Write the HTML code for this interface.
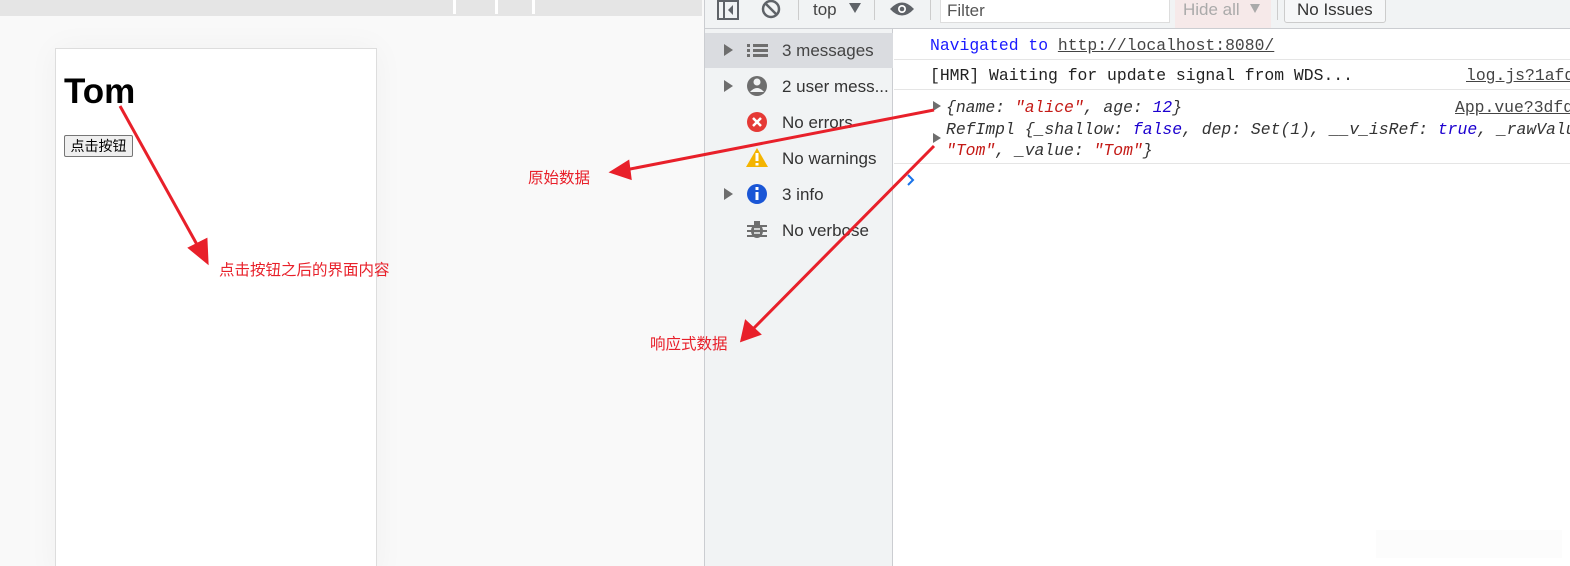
<!DOCTYPE html>
<html><head><meta charset="utf-8"><style>
*{margin:0;padding:0;box-sizing:border-box}
html,body{width:1570px;height:566px;overflow:hidden}
body{position:relative;background:#f9f9f9;font-family:"Liberation Sans","Noto Sans CJK SC",sans-serif}
.abs{position:absolute}
.mono{font-family:"Liberation Mono","Noto Sans CJK SC",monospace;font-size:16.4px;white-space:nowrap}
.side{font-size:17px;color:#333}
</style></head><body>
<div class="abs" style="left:0;top:0;width:702px;height:16px;background:#e5e5e5"></div>
<div class="abs" style="left:453px;top:0;width:3px;height:14px;background:#fff"></div>
<div class="abs" style="left:495px;top:0;width:3px;height:14px;background:#fff"></div>
<div class="abs" style="left:532px;top:0;width:3px;height:14px;background:#fff"></div>
<div class="abs" style="left:55px;top:48px;width:322px;height:530px;background:#fff;border:1px solid #ddd;box-shadow:0 0 30px rgba(0,0,0,0.04)"></div>
<div class="abs" style="left:64px;top:72px;font-size:35px;font-weight:bold;color:#000">Tom</div>
<div class="abs" style="left:64px;top:135px;width:69px;height:22px;border:1px solid #767676;border-radius:2px;background:#efefef;font-size:14px;line-height:20px;text-align:center">点击按钮</div>

<div class="abs" style="left:704px;top:0;width:866px;height:566px;background:#fff;border-left:1px solid #cbcdd1"></div>
<div class="abs" style="left:705px;top:0;width:865px;height:29px;background:#f1f3f4;border-bottom:1px solid #cbcdd1"></div>
<svg class="abs" style="left:716px;top:0" width="26" height="22"><rect x="2" y="1" width="20" height="18" fill="none" stroke="#5f6368" stroke-width="2"/><line x1="8" y1="1" x2="8" y2="19" stroke="#5f6368" stroke-width="2"/><path d="M17 5 L12 10 L17 15Z" fill="#5f6368"/></svg>
<svg class="abs" style="left:760px;top:0" width="24" height="22"><circle cx="11" cy="9" r="8" fill="none" stroke="#5f6368" stroke-width="2.5"/><line x1="5.5" y1="3.5" x2="16.5" y2="14.5" stroke="#5f6368" stroke-width="2.5"/></svg>
<div class="abs" style="left:798px;top:0;width:1px;height:20px;background:#ccc"></div>
<div class="abs side" style="left:813px;top:0;color:#444">top</div>
<div class="abs" style="left:849px;top:3px;width:0;height:0;border-left:6px solid transparent;border-right:6px solid transparent;border-top:10px solid #5f6368"></div>
<div class="abs" style="left:874px;top:0;width:1px;height:20px;background:#ccc"></div>
<svg class="abs" style="left:889px;top:0" width="28" height="20"><path d="M1 9 Q13 -4 25 9 Q13 22 1 9Z" fill="#5f6368"/><circle cx="13" cy="9" r="4" fill="#fff"/><circle cx="13" cy="9" r="2.3" fill="#5f6368"/></svg>
<div class="abs" style="left:930px;top:0;width:1px;height:20px;background:#ccc"></div>
<div class="abs" style="left:940px;top:-1px;width:230px;height:24px;background:#fff;border:1px solid #ddd;border-top:none"></div>
<div class="abs side" style="left:947px;top:1px;color:#555">Filter</div>
<div class="abs" style="left:1175px;top:0;width:96px;height:28px;background:#f6e9e9"></div>
<div class="abs side" style="left:1183px;top:0;color:#aaa">Hide all</div>
<div class="abs" style="left:1250px;top:4px;border-left:5px solid transparent;border-right:5px solid transparent;border-top:9px solid #aaa"></div>
<div class="abs" style="left:1277px;top:0;width:1px;height:20px;background:#ccc"></div>
<div class="abs" style="left:1284px;top:-2px;width:102px;height:25px;border:1px solid #ccc;border-radius:3px;background:#f6f7f8"></div>
<div class="abs side" style="left:1297px;top:0;color:#333">No Issues</div>

<div class="abs" style="left:705px;top:29px;width:188px;height:537px;background:#f1f3f4;border-right:1px solid #cbcdd1"></div>
<div class="abs" style="left:705px;top:33px;width:188px;height:35px;background:#dadce0"></div>
<svg class="abs" style="left:705px;top:29px" width="188" height="220">
<g fill="#6e6e6e"><path d="M19 15 L28 21 L19 27Z"/><path d="M19 51 L28 57 L19 63Z"/><path d="M19 159 L28 165 L19 171Z"/></g>
<g fill="#6e6e6e"><rect x="42" y="15" width="3" height="3"/><rect x="48" y="15" width="15" height="3"/><rect x="42" y="20" width="3" height="3"/><rect x="48" y="20" width="15" height="3"/><rect x="42" y="25" width="3" height="3"/><rect x="48" y="25" width="15" height="3"/></g>
<circle cx="52" cy="57" r="10" fill="#6e6e6e"/><circle cx="52" cy="53" r="3.5" fill="#f1f3f4"/><path d="M45 63 Q52 55 59 63Z" fill="#f1f3f4"/>
<circle cx="52" cy="93" r="10" fill="#e53935"/><path d="M48 89 L56 97 M56 89 L48 97" stroke="#fff" stroke-width="2.5"/>
<path d="M52 119 L63 138 L41 138Z" fill="#f4b400"/><rect x="50.5" y="124" width="3" height="8" fill="#fff"/><rect x="50.5" y="134" width="3" height="2.5" fill="#fff"/>
<circle cx="52" cy="165" r="10" fill="#1a56d6"/><rect x="50.5" y="163" width="3" height="8" fill="#fff"/><rect x="50.5" y="158" width="3" height="3" fill="#fff"/>
<g fill="#6e6e6e"><ellipse cx="52" cy="202" rx="6" ry="7"/><rect x="49" y="192" width="6" height="4"/><path d="M42 197h20M42 202h20M42 207h20" stroke="#6e6e6e" stroke-width="2"/></g>
<path d="M49 200h6M49 204h6" stroke="#f1f3f4" stroke-width="1.5"/>
</svg>
<div class="abs side" style="left:782px;top:41px;color:#444">3 messages</div>
<div class="abs side" style="left:782px;top:77px">2 user mess...</div>
<div class="abs side" style="left:782px;top:113px">No errors</div>
<div class="abs side" style="left:782px;top:149px">No warnings</div>
<div class="abs side" style="left:782px;top:185px">3 info</div>
<div class="abs side" style="left:782px;top:221px">No verbose</div>

<div class="abs mono" style="left:930px;top:36px;color:#1a1aff">Navigated to <span style="color:#444;text-decoration:underline">http://localhost:8080/</span></div>
<div class="abs" style="left:894px;top:59px;width:676px;height:1px;background:#e5e5e5"></div>
<div class="abs mono" style="left:930px;top:66px;color:#222">[HMR] Waiting for update signal from WDS...</div>
<div class="abs mono" style="left:1466px;top:66px;color:#444;text-decoration:underline">log.js?1afd</div>
<div class="abs" style="left:894px;top:89px;width:676px;height:1px;background:#e5e5e5"></div>
<svg class="abs" style="left:932px;top:100px" width="12" height="50"><path d="M1 1 L9 6 L1 11Z" fill="#6e6e6e"/><path d="M1 33 L9 38 L1 43Z" fill="#6e6e6e"/></svg>
<div class="abs mono" style="left:946px;top:98px;color:#333;font-style:italic">{name: <span style="color:#c41a16">"alice"</span>, age: <span style="color:#1c00cf">12</span>}</div>
<div class="abs mono" style="left:1455px;top:98px;color:#444;text-decoration:underline">App.vue?3dfd</div>
<div class="abs mono" style="left:946px;top:120px;color:#333;font-style:italic">RefImpl {_shallow: <span style="color:#1c00cf">false</span>, dep: Set(1), __v_isRef: <span style="color:#1c00cf">true</span>, _rawValue:</div>
<div class="abs mono" style="left:946px;top:141px;color:#333;font-style:italic"><span style="color:#c41a16">"Tom"</span>, _value: <span style="color:#c41a16">"Tom"</span>}</div>
<div class="abs" style="left:894px;top:163px;width:676px;height:1px;background:#e5e5e5"></div>
<svg class="abs" style="left:906px;top:173px" width="12" height="14"><path d="M2 2 L7 7 L2 12" fill="none" stroke="#1a73e8" stroke-width="2"/></svg>
<div class="abs" style="left:1376px;top:530px;width:186px;height:28px;background:#fcfcfc"></div>

<svg class="abs" style="left:0;top:0" width="1570" height="566">
<g stroke="#e8202a" stroke-width="3" fill="#e8202a">
<line x1="120" y1="106" x2="200" y2="250"/><path d="M207 262 L190 248 L206 240Z"/>
<line x1="934" y1="110" x2="625" y2="170"/><path d="M612 172 L628 162 L630 178Z"/>
<line x1="934" y1="146" x2="752" y2="330"/><path d="M742 340 L746 322 L759 334Z"/>
</g>
<g fill="#e8202a" font-size="15.5" font-family="'Liberation Sans','Noto Sans CJK SC',sans-serif">
<text x="528" y="183">原始数据</text>
<text x="219" y="275">点击按钮之后的界面内容</text>
<text x="650" y="349">响应式数据</text>
</g>
</svg>
</body></html>
